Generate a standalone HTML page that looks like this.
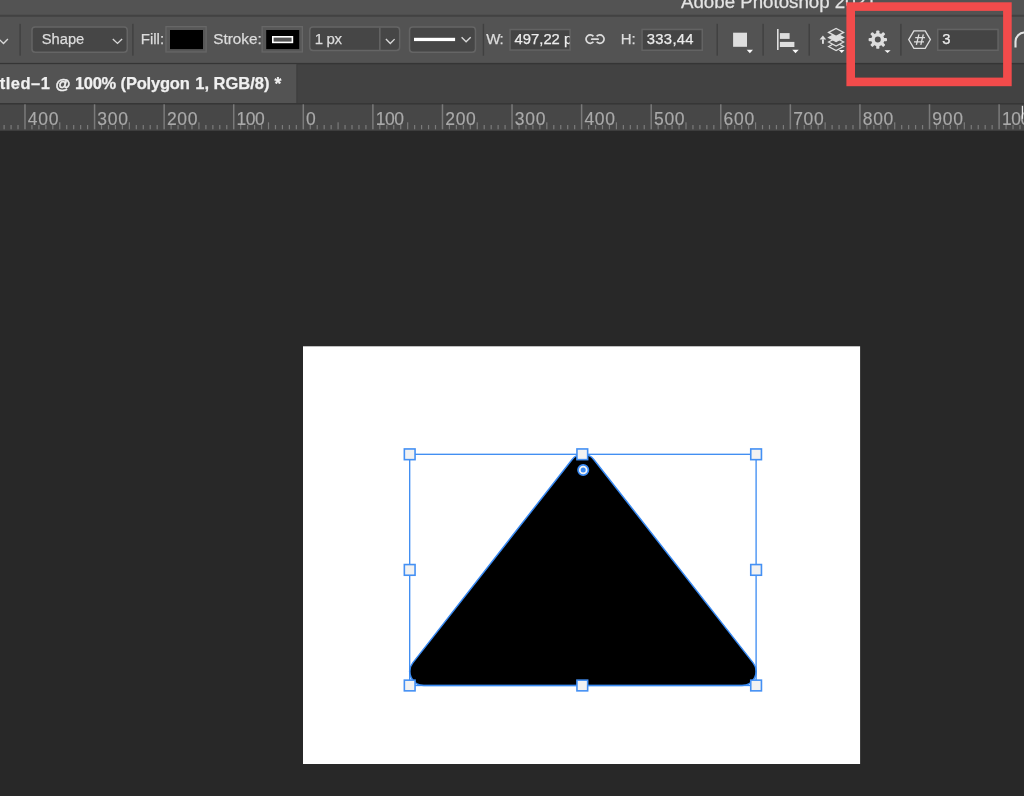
<!DOCTYPE html>
<html><head><meta charset="utf-8">
<style>
*{margin:0;padding:0;box-sizing:border-box}
html,body{width:1024px;height:796px;overflow:hidden;background:#282828;font-family:"Liberation Sans",sans-serif}
.a{position:absolute;left:0;top:0}
svg text{white-space:pre}
</style></head><body>
<svg class="a" width="1024" height="796">
<rect x="0" y="0" width="1024" height="64" fill="#535353"/>
<rect x="0" y="14.7" width="1024" height="2.1" fill="#424242"/>
<rect x="0" y="62.9" width="1024" height="1.3" fill="#353535"/>
<rect x="0" y="64.2" width="1024" height="39" fill="#424242"/>
<rect x="0" y="64.2" width="296.6" height="38.8" fill="#535353"/>
<rect x="296.4" y="64.2" width="1" height="38.8" fill="#3e3e3e"/>
<rect x="0" y="103" width="1024" height="1.3" fill="#363636"/>
<rect x="0" y="104.3" width="1024" height="26.4" fill="#474747"/>
<rect x="303" y="346.3" width="557.1" height="417.7" fill="#fff"/>
</svg>
<svg class="a" width="1024" height="796" style="will-change:transform;font-family:'Liberation Sans'">
<text x="681" y="8.3" font-size="18.7" font-weight="400" fill="#e4e4e4" stroke="#e4e4e4" stroke-width="0.25" >Adobe Photoshop 2021</text><polyline points="-1,39.1 3.5,43.5 7.9,39.1" fill="none" stroke="#d8d8d8" stroke-width="1.35"/><rect x="19.400000000000002" y="23.8" width="1.4" height="31.9" fill="#404040"/><rect x="132.20000000000002" y="23.8" width="1.4" height="31.9" fill="#404040"/><rect x="482.7" y="23.8" width="1.4" height="31.9" fill="#404040"/><rect x="716.5" y="23.8" width="1.4" height="31.9" fill="#404040"/><rect x="762.4" y="23.8" width="1.4" height="31.9" fill="#404040"/><rect x="808.5" y="23.8" width="1.4" height="31.9" fill="#404040"/><rect x="900.1999999999999" y="23.8" width="1.4" height="31.9" fill="#404040"/><rect x="31.95" y="27.05" width="95.3" height="25.1" rx="3.2" fill="#464646" stroke="#656565" stroke-width="1.5"/><text x="41.8" y="44.0" font-size="14.7" font-weight="400" fill="#dcdcdc" stroke="#dcdcdc" stroke-width="0.25" >Shape</text><polyline points="112.8,39.1 117.5,43.4 122.1,39.1" fill="none" stroke="#d8d8d8" stroke-width="1.35"/><text x="140.8" y="44.0" font-size="15" font-weight="400" fill="#dcdcdc" stroke="#dcdcdc" stroke-width="0.25" >Fill:</text><rect x="165.95000000000002" y="26.65" width="40.2" height="25.3" fill="#575757" stroke="#676767" stroke-width="1.3"/><rect x="170.0" y="30" width="33" height="19.1" fill="#000"/><text x="213.2" y="44.1" font-size="15.3" font-weight="400" fill="#dcdcdc" stroke="#dcdcdc" stroke-width="0.25" >Stroke:</text><rect x="262.15" y="26.65" width="40.2" height="25.3" fill="#575757" stroke="#676767" stroke-width="1.3"/><rect x="266.2" y="30" width="33" height="19.1" fill="#000"/><rect x="272.8" y="36.8" width="19.6" height="5.6" fill="#535353" stroke="#fff" stroke-width="1.6"/><rect x="309.75" y="27.05" width="89.9" height="23.5" rx="3.2" fill="#464646" stroke="#656565" stroke-width="1.5"/><rect x="379.1" y="27.5" width="1.5" height="22.6" fill="#656565"/><text x="314.8" y="44.1" font-size="15" font-weight="400" fill="#dcdcdc" stroke="#dcdcdc" stroke-width="0.25" letter-spacing="-0.4" >1 px</text><polyline points="385.9,39.1 390.3,43.5 394.6,39.1" fill="none" stroke="#d8d8d8" stroke-width="1.35"/><rect x="409.55" y="27.05" width="65.9" height="25.1" rx="3.2" fill="#464646" stroke="#656565" stroke-width="1.5"/><rect x="414" y="37.8" width="41.1" height="3.3" fill="#fff"/><polyline points="461.6,37.3 466.1,41.8 470.7,37.3" fill="none" stroke="#d8d8d8" stroke-width="1.35"/><text x="486.2" y="44.0" font-size="15" font-weight="400" fill="#dcdcdc" stroke="#dcdcdc" stroke-width="0.25" letter-spacing="-0.5" >W:</text><rect x="510.05" y="29.55" width="60.0" height="20.5" fill="#444444" stroke="#636363" stroke-width="1.5"/><clipPath id="cw"><rect x="510.5" y="30" width="59" height="20"/></clipPath><text x="514.6" y="44.3" font-size="14.8" font-weight="400" fill="#ececec" stroke="#ececec" stroke-width="0.25" clip-path="url(#cw)">497,22 px</text><path d="M593.42,36.40 A4.2,4.2 0 1 0 593.42,41.80" fill="none" stroke="#dcdcdc" stroke-width="1.7"/><path d="M596.68,36.40 A4.2,4.2 0 1 1 596.68,41.80" fill="none" stroke="#dcdcdc" stroke-width="1.7"/><rect x="590.9" y="38.2" width="8.1" height="1.9" rx="0.9" fill="#dcdcdc"/><text x="620.7" y="44.0" font-size="15" font-weight="400" fill="#dcdcdc" stroke="#dcdcdc" stroke-width="0.25" >H:</text><rect x="642.05" y="29.45" width="60.2" height="20.8" fill="#444444" stroke="#636363" stroke-width="1.5"/><text x="646.8" y="44.3" font-size="14.8" font-weight="400" fill="#ececec" stroke="#ececec" stroke-width="0.25" letter-spacing="0.3" >333,44</text><rect x="733.1" y="32.7" width="13.9" height="14.1" fill="#dedede"/><polygon points="746.7,49.8 753.0,49.8 749.85,53.199999999999996" fill="#f8f8f8"/><rect x="777" y="29" width="1.6" height="21" fill="#dedede"/><rect x="779.9" y="33.1" width="9.7" height="5.8" fill="#dedede"/><rect x="779.9" y="41.9" width="14.5" height="5.1" fill="#dedede"/><polygon points="792.3000000000001,49.8 798.6999999999999,49.8 795.5,53.199999999999996" fill="#f8f8f8"/><polygon points="819.6,39.6 822.9,35.6 826.2,39.6" fill="#dedede"/><rect x="822" y="39.4" width="1.9" height="4.4" fill="#dedede"/><path d="M828.6,46.5 L836.1,42.5 L843.6,46.5 L836.1,50.5 Z" fill="none" stroke="#dedede" stroke-width="1.3" stroke-linejoin="miter"/><path d="M828.6,42 L836.1,38 L843.6,42 L836.1,46 Z" fill="#535353" stroke="#dedede" stroke-width="1.3" stroke-linejoin="miter"/><path d="M828.6,37.5 L836.1,33.5 L843.6,37.5 L836.1,41.5 Z" fill="#dedede" stroke="#dedede" stroke-width="1.3" stroke-linejoin="miter"/><path d="M828.6,32.4 L836.1,28.4 L843.6,32.4 L836.1,36.4 Z" fill="#535353" stroke="#dedede" stroke-width="1.3" stroke-linejoin="miter"/><polygon points="838.9000000000001,49.9 844.5,49.9 841.7,53.099999999999994" fill="#f8f8f8"/><g transform="translate(877.8,39.6)" fill="#dedede"><path fill-rule="evenodd" d="M0,-6.6 A6.6,6.6 0 1 1 0,6.6 A6.6,6.6 0 1 1 0,-6.6 Z M0,-3 A3,3 0 1 0 0,3 A3,3 0 1 0 0,-3 Z"/><rect x="-1.6" y="-9.2" width="3.2" height="4.6" rx="0.9" transform="rotate(0)"/><rect x="-1.6" y="-9.2" width="3.2" height="4.6" rx="0.9" transform="rotate(45)"/><rect x="-1.6" y="-9.2" width="3.2" height="4.6" rx="0.9" transform="rotate(90)"/><rect x="-1.6" y="-9.2" width="3.2" height="4.6" rx="0.9" transform="rotate(135)"/><rect x="-1.6" y="-9.2" width="3.2" height="4.6" rx="0.9" transform="rotate(180)"/><rect x="-1.6" y="-9.2" width="3.2" height="4.6" rx="0.9" transform="rotate(225)"/><rect x="-1.6" y="-9.2" width="3.2" height="4.6" rx="0.9" transform="rotate(270)"/><rect x="-1.6" y="-9.2" width="3.2" height="4.6" rx="0.9" transform="rotate(315)"/></g><polygon points="884.5,50.199999999999996 890.5999999999999,50.199999999999996 887.55,53.099999999999994" fill="#f8f8f8"/><path d="M908.7,39.6 L913.9,30.9 L925.2,30.9 L930.4,39.6 L925.2,48.3 L913.9,48.3 Z" fill="none" stroke="#dedede" stroke-width="1.3"/><path d="M918.9,34.3 L916.4,44.9 M923.3,34.3 L920.8,44.9 M915.2,37.6 L925,37.6 M914,41.8 L924,41.8" fill="none" stroke="#dedede" stroke-width="1.3"/><rect x="937.75" y="29.45" width="60.3" height="20.8" fill="#444444" stroke="#636363" stroke-width="1.5"/><text x="942.3" y="44.3" font-size="14.8" font-weight="400" fill="#ececec" stroke="#ececec" stroke-width="0.25" >3</text><path d="M1015.5,47.6 L1015.5,41.5 A9,9 0 0 1 1024.5,32.5" fill="none" stroke="#e2e2e2" stroke-width="2.1"/>
<text x="-0.3" y="88.8" font-size="16.5" font-weight="700" fill="#f0f0f0" stroke="#f0f0f0" stroke-width="0.25" letter-spacing="0.52" >tled–1</text><text x="55.4" y="89.4" font-size="15.2" font-weight="700" fill="#f0f0f0" stroke="#f0f0f0" stroke-width="0.5" >@</text><text x="75.0" y="88.8" font-size="16.5" font-weight="700" fill="#f0f0f0" stroke="#f0f0f0" stroke-width="0.25" letter-spacing="-0.35" >100%</text><text x="120.6" y="88.8" font-size="16.5" font-weight="700" fill="#f0f0f0" stroke="#f0f0f0" stroke-width="0.25" letter-spacing="-0.2" >(Polygon</text><text x="195.3" y="88.8" font-size="16.5" font-weight="700" fill="#f0f0f0" stroke="#f0f0f0" stroke-width="0.25" >1,</text><text x="213.6" y="88.8" font-size="16.5" font-weight="700" fill="#f0f0f0" stroke="#f0f0f0" stroke-width="0.25" >RGB/8)</text><text x="274.4" y="90.4" font-size="17.5" font-weight="700" fill="#f0f0f0" stroke="#f0f0f0" stroke-width="0.25" >*</text>
<rect x="3.51" y="125" width="1.2" height="4.3" fill="#7a7a7a"/><rect x="10.46" y="125" width="1.2" height="4.3" fill="#7a7a7a"/><rect x="17.42" y="125" width="1.2" height="4.3" fill="#7a7a7a"/><text x="-41.8" y="124.7" font-size="17.5" font-weight="400" fill="#aaaaaa" stroke="#aaaaaa" stroke-width="0.15" letter-spacing="0.7" >500</text><rect x="24.23" y="104.3" width="1.5" height="25" fill="#7a7a7a"/><rect x="31.34" y="125" width="1.2" height="4.3" fill="#7a7a7a"/><rect x="38.30" y="125" width="1.2" height="4.3" fill="#7a7a7a"/><rect x="45.25" y="125" width="1.2" height="4.3" fill="#7a7a7a"/><rect x="52.21" y="125" width="1.2" height="4.3" fill="#7a7a7a"/><rect x="59.17" y="122.3" width="1.2" height="7" fill="#7a7a7a"/><rect x="66.13" y="125" width="1.2" height="4.3" fill="#7a7a7a"/><rect x="73.09" y="125" width="1.2" height="4.3" fill="#7a7a7a"/><rect x="80.04" y="125" width="1.2" height="4.3" fill="#7a7a7a"/><rect x="87.00" y="125" width="1.2" height="4.3" fill="#7a7a7a"/><text x="27.78" y="124.7" font-size="17.5" font-weight="400" fill="#aaaaaa" stroke="#aaaaaa" stroke-width="0.15" letter-spacing="0.7" >400</text><rect x="93.81" y="104.3" width="1.5" height="25" fill="#7a7a7a"/><rect x="100.92" y="125" width="1.2" height="4.3" fill="#7a7a7a"/><rect x="107.88" y="125" width="1.2" height="4.3" fill="#7a7a7a"/><rect x="114.83" y="125" width="1.2" height="4.3" fill="#7a7a7a"/><rect x="121.79" y="125" width="1.2" height="4.3" fill="#7a7a7a"/><rect x="128.75" y="122.3" width="1.2" height="7" fill="#7a7a7a"/><rect x="135.71" y="125" width="1.2" height="4.3" fill="#7a7a7a"/><rect x="142.67" y="125" width="1.2" height="4.3" fill="#7a7a7a"/><rect x="149.62" y="125" width="1.2" height="4.3" fill="#7a7a7a"/><rect x="156.58" y="125" width="1.2" height="4.3" fill="#7a7a7a"/><text x="97.36" y="124.7" font-size="17.5" font-weight="400" fill="#aaaaaa" stroke="#aaaaaa" stroke-width="0.15" letter-spacing="0.7" >300</text><rect x="163.39" y="104.3" width="1.5" height="25" fill="#7a7a7a"/><rect x="170.50" y="125" width="1.2" height="4.3" fill="#7a7a7a"/><rect x="177.46" y="125" width="1.2" height="4.3" fill="#7a7a7a"/><rect x="184.41" y="125" width="1.2" height="4.3" fill="#7a7a7a"/><rect x="191.37" y="125" width="1.2" height="4.3" fill="#7a7a7a"/><rect x="198.33" y="122.3" width="1.2" height="7" fill="#7a7a7a"/><rect x="205.29" y="125" width="1.2" height="4.3" fill="#7a7a7a"/><rect x="212.25" y="125" width="1.2" height="4.3" fill="#7a7a7a"/><rect x="219.20" y="125" width="1.2" height="4.3" fill="#7a7a7a"/><rect x="226.16" y="125" width="1.2" height="4.3" fill="#7a7a7a"/><text x="166.94" y="124.7" font-size="17.5" font-weight="400" fill="#aaaaaa" stroke="#aaaaaa" stroke-width="0.15" letter-spacing="0.7" >200</text><rect x="232.97" y="104.3" width="1.5" height="25" fill="#7a7a7a"/><rect x="240.08" y="125" width="1.2" height="4.3" fill="#7a7a7a"/><rect x="247.04" y="125" width="1.2" height="4.3" fill="#7a7a7a"/><rect x="253.99" y="125" width="1.2" height="4.3" fill="#7a7a7a"/><rect x="260.95" y="125" width="1.2" height="4.3" fill="#7a7a7a"/><rect x="267.91" y="122.3" width="1.2" height="7" fill="#7a7a7a"/><rect x="274.87" y="125" width="1.2" height="4.3" fill="#7a7a7a"/><rect x="281.83" y="125" width="1.2" height="4.3" fill="#7a7a7a"/><rect x="288.78" y="125" width="1.2" height="4.3" fill="#7a7a7a"/><rect x="295.74" y="125" width="1.2" height="4.3" fill="#7a7a7a"/><text x="236.52" y="124.7" font-size="17.5" font-weight="400" fill="#aaaaaa" stroke="#aaaaaa" stroke-width="0.15" letter-spacing="-0.45" >100</text><rect x="302.55" y="104.3" width="1.5" height="25" fill="#7a7a7a"/><rect x="309.66" y="125" width="1.2" height="4.3" fill="#7a7a7a"/><rect x="316.62" y="125" width="1.2" height="4.3" fill="#7a7a7a"/><rect x="323.57" y="125" width="1.2" height="4.3" fill="#7a7a7a"/><rect x="330.53" y="125" width="1.2" height="4.3" fill="#7a7a7a"/><rect x="337.49" y="122.3" width="1.2" height="7" fill="#7a7a7a"/><rect x="344.45" y="125" width="1.2" height="4.3" fill="#7a7a7a"/><rect x="351.41" y="125" width="1.2" height="4.3" fill="#7a7a7a"/><rect x="358.36" y="125" width="1.2" height="4.3" fill="#7a7a7a"/><rect x="365.32" y="125" width="1.2" height="4.3" fill="#7a7a7a"/><text x="306.1" y="124.7" font-size="17.5" font-weight="400" fill="#aaaaaa" stroke="#aaaaaa" stroke-width="0.15" letter-spacing="0.7" >0</text><rect x="372.13" y="104.3" width="1.5" height="25" fill="#7a7a7a"/><rect x="379.24" y="125" width="1.2" height="4.3" fill="#7a7a7a"/><rect x="386.20" y="125" width="1.2" height="4.3" fill="#7a7a7a"/><rect x="393.15" y="125" width="1.2" height="4.3" fill="#7a7a7a"/><rect x="400.11" y="125" width="1.2" height="4.3" fill="#7a7a7a"/><rect x="407.07" y="122.3" width="1.2" height="7" fill="#7a7a7a"/><rect x="414.03" y="125" width="1.2" height="4.3" fill="#7a7a7a"/><rect x="420.99" y="125" width="1.2" height="4.3" fill="#7a7a7a"/><rect x="427.94" y="125" width="1.2" height="4.3" fill="#7a7a7a"/><rect x="434.90" y="125" width="1.2" height="4.3" fill="#7a7a7a"/><text x="375.68" y="124.7" font-size="17.5" font-weight="400" fill="#aaaaaa" stroke="#aaaaaa" stroke-width="0.15" letter-spacing="-0.45" >100</text><rect x="441.71" y="104.3" width="1.5" height="25" fill="#7a7a7a"/><rect x="448.82" y="125" width="1.2" height="4.3" fill="#7a7a7a"/><rect x="455.78" y="125" width="1.2" height="4.3" fill="#7a7a7a"/><rect x="462.73" y="125" width="1.2" height="4.3" fill="#7a7a7a"/><rect x="469.69" y="125" width="1.2" height="4.3" fill="#7a7a7a"/><rect x="476.65" y="122.3" width="1.2" height="7" fill="#7a7a7a"/><rect x="483.61" y="125" width="1.2" height="4.3" fill="#7a7a7a"/><rect x="490.57" y="125" width="1.2" height="4.3" fill="#7a7a7a"/><rect x="497.52" y="125" width="1.2" height="4.3" fill="#7a7a7a"/><rect x="504.48" y="125" width="1.2" height="4.3" fill="#7a7a7a"/><text x="445.26" y="124.7" font-size="17.5" font-weight="400" fill="#aaaaaa" stroke="#aaaaaa" stroke-width="0.15" letter-spacing="0.7" >200</text><rect x="511.29" y="104.3" width="1.5" height="25" fill="#7a7a7a"/><rect x="518.40" y="125" width="1.2" height="4.3" fill="#7a7a7a"/><rect x="525.36" y="125" width="1.2" height="4.3" fill="#7a7a7a"/><rect x="532.31" y="125" width="1.2" height="4.3" fill="#7a7a7a"/><rect x="539.27" y="125" width="1.2" height="4.3" fill="#7a7a7a"/><rect x="546.23" y="122.3" width="1.2" height="7" fill="#7a7a7a"/><rect x="553.19" y="125" width="1.2" height="4.3" fill="#7a7a7a"/><rect x="560.15" y="125" width="1.2" height="4.3" fill="#7a7a7a"/><rect x="567.10" y="125" width="1.2" height="4.3" fill="#7a7a7a"/><rect x="574.06" y="125" width="1.2" height="4.3" fill="#7a7a7a"/><text x="514.84" y="124.7" font-size="17.5" font-weight="400" fill="#aaaaaa" stroke="#aaaaaa" stroke-width="0.15" letter-spacing="0.7" >300</text><rect x="580.87" y="104.3" width="1.5" height="25" fill="#7a7a7a"/><rect x="587.98" y="125" width="1.2" height="4.3" fill="#7a7a7a"/><rect x="594.94" y="125" width="1.2" height="4.3" fill="#7a7a7a"/><rect x="601.89" y="125" width="1.2" height="4.3" fill="#7a7a7a"/><rect x="608.85" y="125" width="1.2" height="4.3" fill="#7a7a7a"/><rect x="615.81" y="122.3" width="1.2" height="7" fill="#7a7a7a"/><rect x="622.77" y="125" width="1.2" height="4.3" fill="#7a7a7a"/><rect x="629.73" y="125" width="1.2" height="4.3" fill="#7a7a7a"/><rect x="636.68" y="125" width="1.2" height="4.3" fill="#7a7a7a"/><rect x="643.64" y="125" width="1.2" height="4.3" fill="#7a7a7a"/><text x="584.42" y="124.7" font-size="17.5" font-weight="400" fill="#aaaaaa" stroke="#aaaaaa" stroke-width="0.15" letter-spacing="0.7" >400</text><rect x="650.45" y="104.3" width="1.5" height="25" fill="#7a7a7a"/><rect x="657.56" y="125" width="1.2" height="4.3" fill="#7a7a7a"/><rect x="664.52" y="125" width="1.2" height="4.3" fill="#7a7a7a"/><rect x="671.47" y="125" width="1.2" height="4.3" fill="#7a7a7a"/><rect x="678.43" y="125" width="1.2" height="4.3" fill="#7a7a7a"/><rect x="685.39" y="122.3" width="1.2" height="7" fill="#7a7a7a"/><rect x="692.35" y="125" width="1.2" height="4.3" fill="#7a7a7a"/><rect x="699.31" y="125" width="1.2" height="4.3" fill="#7a7a7a"/><rect x="706.26" y="125" width="1.2" height="4.3" fill="#7a7a7a"/><rect x="713.22" y="125" width="1.2" height="4.3" fill="#7a7a7a"/><text x="654.0" y="124.7" font-size="17.5" font-weight="400" fill="#aaaaaa" stroke="#aaaaaa" stroke-width="0.15" letter-spacing="0.7" >500</text><rect x="720.03" y="104.3" width="1.5" height="25" fill="#7a7a7a"/><rect x="727.14" y="125" width="1.2" height="4.3" fill="#7a7a7a"/><rect x="734.10" y="125" width="1.2" height="4.3" fill="#7a7a7a"/><rect x="741.05" y="125" width="1.2" height="4.3" fill="#7a7a7a"/><rect x="748.01" y="125" width="1.2" height="4.3" fill="#7a7a7a"/><rect x="754.97" y="122.3" width="1.2" height="7" fill="#7a7a7a"/><rect x="761.93" y="125" width="1.2" height="4.3" fill="#7a7a7a"/><rect x="768.89" y="125" width="1.2" height="4.3" fill="#7a7a7a"/><rect x="775.84" y="125" width="1.2" height="4.3" fill="#7a7a7a"/><rect x="782.80" y="125" width="1.2" height="4.3" fill="#7a7a7a"/><text x="723.58" y="124.7" font-size="17.5" font-weight="400" fill="#aaaaaa" stroke="#aaaaaa" stroke-width="0.15" letter-spacing="0.7" >600</text><rect x="789.61" y="104.3" width="1.5" height="25" fill="#7a7a7a"/><rect x="796.72" y="125" width="1.2" height="4.3" fill="#7a7a7a"/><rect x="803.68" y="125" width="1.2" height="4.3" fill="#7a7a7a"/><rect x="810.63" y="125" width="1.2" height="4.3" fill="#7a7a7a"/><rect x="817.59" y="125" width="1.2" height="4.3" fill="#7a7a7a"/><rect x="824.55" y="122.3" width="1.2" height="7" fill="#7a7a7a"/><rect x="831.51" y="125" width="1.2" height="4.3" fill="#7a7a7a"/><rect x="838.47" y="125" width="1.2" height="4.3" fill="#7a7a7a"/><rect x="845.42" y="125" width="1.2" height="4.3" fill="#7a7a7a"/><rect x="852.38" y="125" width="1.2" height="4.3" fill="#7a7a7a"/><text x="793.16" y="124.7" font-size="17.5" font-weight="400" fill="#aaaaaa" stroke="#aaaaaa" stroke-width="0.15" letter-spacing="0.7" >700</text><rect x="859.19" y="104.3" width="1.5" height="25" fill="#7a7a7a"/><rect x="866.30" y="125" width="1.2" height="4.3" fill="#7a7a7a"/><rect x="873.26" y="125" width="1.2" height="4.3" fill="#7a7a7a"/><rect x="880.21" y="125" width="1.2" height="4.3" fill="#7a7a7a"/><rect x="887.17" y="125" width="1.2" height="4.3" fill="#7a7a7a"/><rect x="894.13" y="122.3" width="1.2" height="7" fill="#7a7a7a"/><rect x="901.09" y="125" width="1.2" height="4.3" fill="#7a7a7a"/><rect x="908.05" y="125" width="1.2" height="4.3" fill="#7a7a7a"/><rect x="915.00" y="125" width="1.2" height="4.3" fill="#7a7a7a"/><rect x="921.96" y="125" width="1.2" height="4.3" fill="#7a7a7a"/><text x="862.74" y="124.7" font-size="17.5" font-weight="400" fill="#aaaaaa" stroke="#aaaaaa" stroke-width="0.15" letter-spacing="0.7" >800</text><rect x="928.77" y="104.3" width="1.5" height="25" fill="#7a7a7a"/><rect x="935.88" y="125" width="1.2" height="4.3" fill="#7a7a7a"/><rect x="942.84" y="125" width="1.2" height="4.3" fill="#7a7a7a"/><rect x="949.79" y="125" width="1.2" height="4.3" fill="#7a7a7a"/><rect x="956.75" y="125" width="1.2" height="4.3" fill="#7a7a7a"/><rect x="963.71" y="122.3" width="1.2" height="7" fill="#7a7a7a"/><rect x="970.67" y="125" width="1.2" height="4.3" fill="#7a7a7a"/><rect x="977.63" y="125" width="1.2" height="4.3" fill="#7a7a7a"/><rect x="984.58" y="125" width="1.2" height="4.3" fill="#7a7a7a"/><rect x="991.54" y="125" width="1.2" height="4.3" fill="#7a7a7a"/><text x="932.32" y="124.7" font-size="17.5" font-weight="400" fill="#aaaaaa" stroke="#aaaaaa" stroke-width="0.15" letter-spacing="0.7" >900</text><rect x="998.35" y="104.3" width="1.5" height="25" fill="#7a7a7a"/><rect x="1005.46" y="125" width="1.2" height="4.3" fill="#7a7a7a"/><rect x="1012.42" y="125" width="1.2" height="4.3" fill="#7a7a7a"/><rect x="1019.37" y="125" width="1.2" height="4.3" fill="#7a7a7a"/><text x="1001.9" y="124.7" font-size="17.5" font-weight="400" fill="#aaaaaa" stroke="#aaaaaa" stroke-width="0.15" letter-spacing="-0.45" >1000</text><rect x="1021.8" y="105.8" width="1.3" height="13" fill="#e6e6e6"/>
<path d="M423.80 685.50 L742.10 685.50 A14.0 14.0 0 0 0 753.12 662.87 L593.97 459.67 A14.0 14.0 0 0 0 571.93 459.67 L412.78 662.87 A14.0 14.0 0 0 0 423.80 685.50 Z" fill="#000" stroke="#3a8af2" stroke-width="1.5"/>
<rect x="409.7" y="454.3" width="346.4" height="231.2" fill="none" stroke="#3a8af2" stroke-width="1.3"/>
<rect x="404.35" y="448.95" width="10.7" height="10.7" fill="#f2f2f2" stroke="#4490f4" stroke-width="1.6"/><rect x="576.95" y="448.95" width="10.7" height="10.7" fill="#f2f2f2" stroke="#4490f4" stroke-width="1.6"/><rect x="750.75" y="448.95" width="10.7" height="10.7" fill="#f2f2f2" stroke="#4490f4" stroke-width="1.6"/><rect x="404.35" y="564.55" width="10.7" height="10.7" fill="#f2f2f2" stroke="#4490f4" stroke-width="1.6"/><rect x="750.75" y="564.55" width="10.7" height="10.7" fill="#f2f2f2" stroke="#4490f4" stroke-width="1.6"/><rect x="404.35" y="680.15" width="10.7" height="10.7" fill="#f2f2f2" stroke="#4490f4" stroke-width="1.6"/><rect x="576.95" y="680.15" width="10.7" height="10.7" fill="#f2f2f2" stroke="#4490f4" stroke-width="1.6"/><rect x="750.75" y="680.15" width="10.7" height="10.7" fill="#f2f2f2" stroke="#4490f4" stroke-width="1.6"/><circle cx="583.2" cy="470" r="5.2" fill="#f4f4f4" stroke="#3a8af2" stroke-width="1.7"/><circle cx="583.2" cy="470" r="2.5" fill="#3a8af2"/>
<rect x="850.7" y="6.6" width="156.7" height="75.3" fill="none" stroke="#f24b4b" stroke-width="8.6"/>
</svg>
</body></html>
